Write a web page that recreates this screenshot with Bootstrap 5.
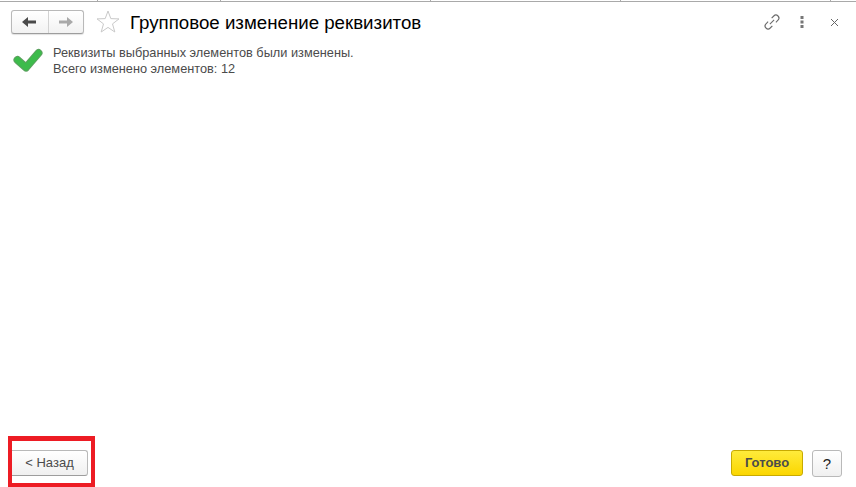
<!DOCTYPE html>
<html lang="ru">
<head>
    <meta charset="UTF-8">
    <meta name="viewport" content="width=device-width, initial-scale=1.0">
    <title>Групповое изменение реквизитов</title>
    <link href="https://cdn.jsdelivr.net/npm/bootstrap@5.3.0/dist/css/bootstrap.min.css" rel="stylesheet">
    <style>
        html, body { height: 100%; }
        body {
            font-family: "Liberation Sans", Arial, sans-serif;
            background: #fff;
            overflow: hidden;
        }
        .form-window { height: 487px; }
        /* thin rule along the top with the small ticks of the window behind */
        .top-rule {
            height: 2px;
            flex: none;
            border-bottom: 1px solid #a9a9a9;
            background:
                linear-gradient(#a9a9a9, #a9a9a9) 97px 0 / 1px 1px no-repeat,
                linear-gradient(#a9a9a9, #a9a9a9) 220px 0 / 1px 1px no-repeat,
                linear-gradient(#a9a9a9, #a9a9a9) 430px 0 / 1px 1px no-repeat,
                linear-gradient(#a9a9a9, #a9a9a9) 620px 0 / 1px 1px no-repeat,
                linear-gradient(#a9a9a9, #a9a9a9) 830px 0 / 1px 1px no-repeat;
        }
        .head-row { padding: 8px 17px 0 11px; height: 39px; }
        .nav-group {
            width: 73px;
            height: 24px;
            border: 1px solid #b9b9b9;
            border-bottom-color: #9d9d9d;
            border-radius: 3px;
            background: linear-gradient(#fff, #f2f2f2);
            box-shadow: 0 1px 1px rgba(0,0,0,.12);
        }
        .nav-part { width: 36px; }
        .nav-part + .nav-part { border-left: 1px solid #d2d2d2; }
        .form-title { font-size: 18.7px; line-height: 25px; color: #000; margin: 0 0 0 10px; font-weight: 400; }
        .star-icon { margin-left: 12px; }
        .msg-row { padding-left: 11px; margin-top: 4px; }
        .msg-text { font-size: 12.75px; line-height: 16px; color: #4b4b4b; margin-left: 9px; }
        .foot-row { padding: 0 14px 0 8px; height: 51px; }
        .mark-frame {
            width: 87px;
            height: 51px;
            border: 4px solid #ed1c24;
            border-top-width: 5px;
            padding: 9px 0 0 0;
        }
        .form-btn {
            font-size: 13px;
            line-height: 22px;
            height: 26px;
            padding: 0;
            border-radius: 3px;
        }
        .back-btn {
            width: 76px;
            color: #4b4b4b;
            border: 1px solid #b9b9b9;
            border-left: 0;
            border-radius: 0 3px 3px 0;
            border-bottom-color: #9d9d9d;
            background: linear-gradient(#fff, #f0f0f0);
        }
        .done-btn {
            width: 72px;
            font-weight: 700;
            color: #4b4b4b;
            border: 1px solid #c8aa00;
            background: linear-gradient(#ffeb3b, #fbd600);
        }
        .help-btn {
            width: 30px;
            height: 27px;
            color: #222;
            font-size: 15px;
            border: 1px solid #b9b9b9;
            background: linear-gradient(#fff, #f0f0f0);
        }
        .gap-btns { gap: 9px; padding-top: 14px; }
        .link-ico { margin-right: 20px; overflow: visible; }
        .dots-ico { margin-right: 26px; }
    </style>
</head>
<body>
    <div class="form-window d-flex flex-column">
        <div class="top-rule"></div>
        <div class="head-row d-flex align-items-start">
            <div class="nav-group d-flex">
                <div class="nav-part d-flex align-items-center justify-content-center">
                    <svg width="15" height="12" viewBox="0 0 15 12"><path d="M0 6 L6 1 V4.5 H14 V7.5 H6 V11 Z" fill="#4a4a4a"/></svg>
                </div>
                <div class="nav-part d-flex align-items-center justify-content-center">
                    <svg width="15" height="12" viewBox="0 0 15 12"><path d="M15 6 L9 1 V4.5 H1 V7.5 H9 V11 Z" fill="#a9a9a9"/></svg>
                </div>
            </div>
            <svg class="star-icon" width="24" height="23" viewBox="0 0 24 23"><path d="M12 1 L14.8 8.6 L23 8.9 L16.5 13.9 L18.8 22 L12 17.4 L5.2 22 L7.5 13.9 L1 8.9 L9.2 8.6 Z" fill="#fff" stroke="#c9c9c9"/></svg>
            <h1 class="form-title">Групповое изменение реквизитов</h1>
            <div class="ms-auto d-flex align-items-center pt-1">
                <svg class="link-ico" width="16" height="16" viewBox="0 0 16 16" fill="none" stroke="#6a6a6a" stroke-width="1.1"><g transform="rotate(-45 8 8)"><path d="M5.5 5 H2.5 a3 3 0 0 0 0 6 H5.5"/><path d="M10.5 5 H13.5 a3 3 0 0 1 0 6 H10.5"/><path d="M5 8 H11"/></g></svg>
                <svg class="dots-ico" width="4" height="12" viewBox="0 0 4 12" fill="#777"><rect x="0.5" y="0" width="3" height="3"/><rect x="0.5" y="4.5" width="3" height="3"/><rect x="0.5" y="9" width="3" height="3"/></svg>
                <svg width="9" height="9" viewBox="0 0 9 9" stroke="#666" stroke-width="1"><path d="M1 1 L8 8 M8 1 L1 8"/></svg>
            </div>
        </div>
        <div class="msg-row d-flex align-items-start">
            <svg width="33" height="29" viewBox="0 0 33 29" fill="none" stroke-linejoin="round" stroke-linecap="round"><path d="M6.5 15 L15 22.5 L27.5 8" stroke="#5f9f62" stroke-width="8"/><path d="M6.5 15 L15 22.5 L27.5 8" stroke="#3dbb4b" stroke-width="6"/></svg>
            <div class="msg-text">Реквизиты выбранных элементов были изменены.<br>Всего изменено элементов: 12</div>
        </div>
        <div class="foot-row mt-auto d-flex align-items-start">
            <div class="mark-frame">
                <button type="button" class="btn form-btn back-btn">&lt; Назад</button>
            </div>
            <div class="ms-auto d-flex gap-btns">
                <button type="button" class="btn form-btn done-btn">Готово</button>
                <button type="button" class="btn form-btn help-btn">?</button>
            </div>
        </div>
    </div>
    <script src="https://cdn.jsdelivr.net/npm/bootstrap@5.3.0/dist/js/bootstrap.bundle.min.js"></script>
</body>
</html>
